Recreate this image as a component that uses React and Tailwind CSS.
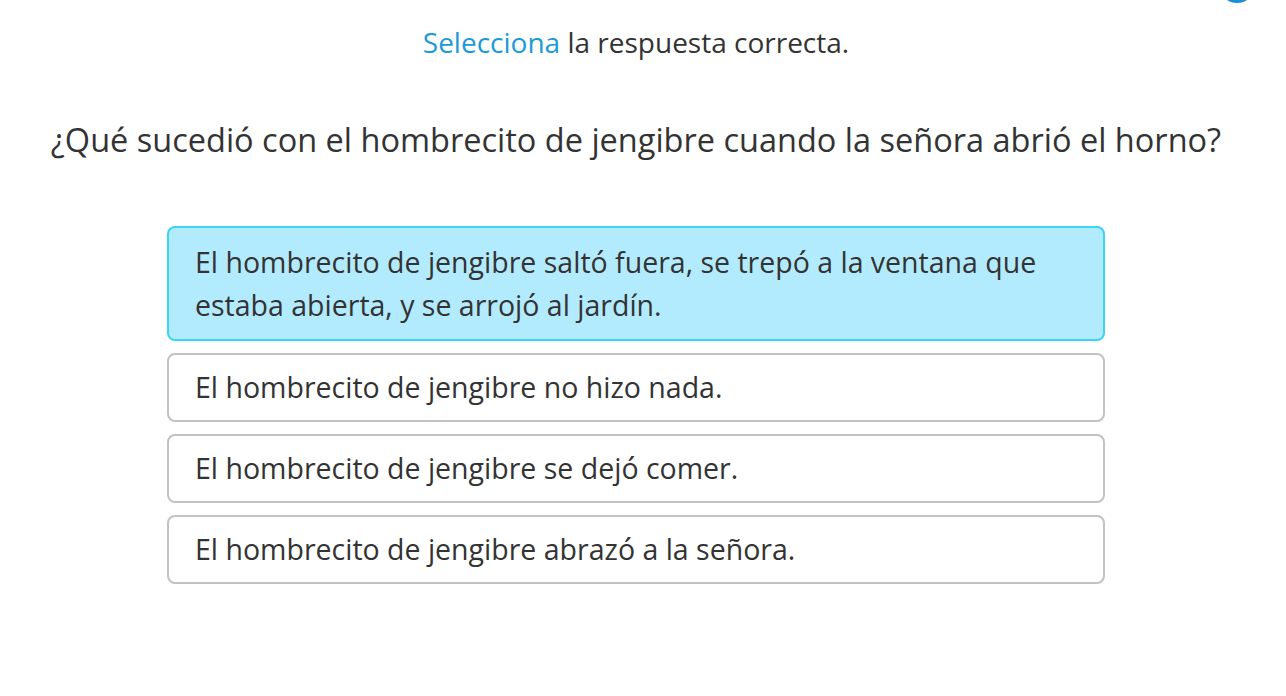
import React from 'react';

const OPTIONS = [
    'El hombrecito de jengibre saltó fuera, se trepó a la ventana que estaba abierta, y se arrojó al jardín.',
    'El hombrecito de jengibre no hizo nada.',
    'El hombrecito de jengibre se dejó comer.',
    'El hombrecito de jengibre abrazó a la señora.',
];

export default function App() {
    const selected = 0;

    return (
        <div className="relative min-h-[696px] w-full overflow-hidden bg-white text-[#333333] font-['Open_Sans','Noto_Sans',sans-serif]">
            {/* clipped round button in the corner */}
            <div className="absolute right-[31px] top-[-33px] h-[36px] w-[36px] rounded-full bg-[#1b8fd8]" />

            <div className="flex flex-col items-center pr-[14px] pt-[24px]">
                <p className="text-[28px] leading-[36px]">
                    <span className="text-[#1a9bd7]">Selecciona</span> la respuesta correcta.
                </p>

                <h1 className="mt-[58px] text-[32.5px] leading-[44px]">
                    ¿Qué sucedió con el hombrecito de jengibre cuando la señora abrió el horno?
                </h1>

                <div className="mt-[64px] flex w-[938px] flex-col gap-[12px]">
                    {OPTIONS.map((text, i) => (
                        <button
                            key={i}
                            className={
                                i === selected
                                    ? 'rounded-[8px] border-2 border-[#3bd4f4] bg-[#b3ebfe] px-[26px] py-[12.5px] text-left text-[28.5px] leading-[43px]'
                                    : 'rounded-[8px] border-2 border-[#c2c2c2] bg-white px-[26px] py-[10px] text-left text-[28.5px] leading-[45px]'
                            }
                        >
                            {text}
                        </button>
                    ))}
                </div>
            </div>
        </div>
    );
}
